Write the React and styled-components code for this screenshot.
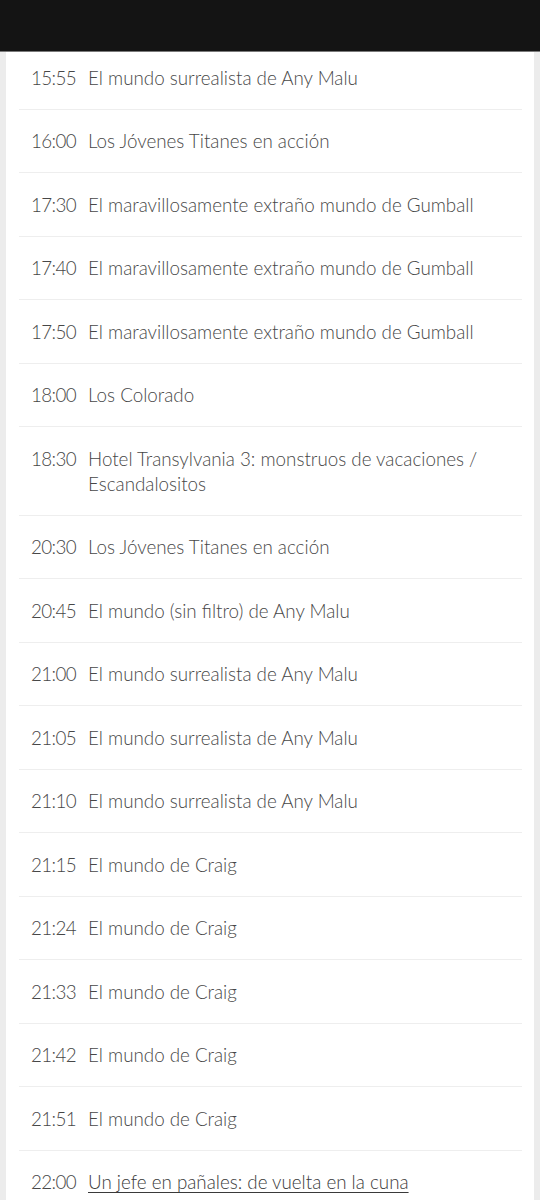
import React from "react";
import styled, { createGlobalStyle } from "styled-components";

const GlobalStyle = createGlobalStyle`
    html, body {
        margin: 0;
        padding: 0;
        background-color: #ececec;
    }
    body {
        font-family: "Lato", "Liberation Sans", sans-serif;
    }
`;

const Pagina = styled.div`
    width: 540px;
    height: 1200px;
    overflow: hidden;
    background-color: #ececec;
    position: relative;
`;

const Cabecalho = styled.div`
    position: absolute;
    top: 0;
    left: 0;
    right: 0;
    height: 51px;
    background-color: #141414;
    border-bottom: 1px solid #7a7a7a;
    z-index: 2;
`;

const Painel = styled.div`
    margin: 0 6px;
    padding: 46px 12px 0 13px;
    background-color: #ffffff;
    min-height: 1200px;
`;

const Linha = styled.div`
    display: flex;
    align-items: flex-start;
    padding: 18.75px 12px 18.75px 12px;
    border-bottom: ${(p) => (p.ultima ? "none" : "1px solid #eeeeee")};
    font-size: 18.8px;
    font-weight: 300;
    line-height: 25px;
    color: #474747;
`;

const Hora = styled.div`
    flex: 0 0 57px;
    letter-spacing: -0.6px;
`;

const Titulo = styled.div`
    flex: 1;
    text-decoration: ${(p) => (p.link ? "underline" : "none")};
    text-underline-offset: 3px;
    color: ${(p) => (p.link ? "#3a3a3a" : "#474747")};
`;

const programas = [
    ["15:55", "El mundo surrealista de Any Malu"],
    ["16:00", "Los Jóvenes Titanes en acción"],
    ["17:30", "El maravillosamente extraño mundo de Gumball"],
    ["17:40", "El maravillosamente extraño mundo de Gumball"],
    ["17:50", "El maravillosamente extraño mundo de Gumball"],
    ["18:00", "Los Colorado"],
    ["18:30", "Hotel Transylvania 3: monstruos de vacaciones / Escandalositos"],
    ["20:30", "Los Jóvenes Titanes en acción"],
    ["20:45", "El mundo (sin filtro) de Any Malu"],
    ["21:00", "El mundo surrealista de Any Malu"],
    ["21:05", "El mundo surrealista de Any Malu"],
    ["21:10", "El mundo surrealista de Any Malu"],
    ["21:15", "El mundo de Craig"],
    ["21:24", "El mundo de Craig"],
    ["21:33", "El mundo de Craig"],
    ["21:42", "El mundo de Craig"],
    ["21:51", "El mundo de Craig"],
    ["22:00", "Un jefe en pañales: de vuelta en la cuna", true],
];

export default class App extends React.Component {
    render() {
        return (
            <Pagina>
                <GlobalStyle />
                <Cabecalho />
                <Painel>
                    {programas.map(([hora, titulo, link], i) => (
                        <Linha key={i} ultima={i === programas.length - 1}>
                            <Hora>{hora}</Hora>
                            <Titulo link={link}>{titulo}</Titulo>
                        </Linha>
                    ))}
                </Painel>
            </Pagina>
        );
    }
}
